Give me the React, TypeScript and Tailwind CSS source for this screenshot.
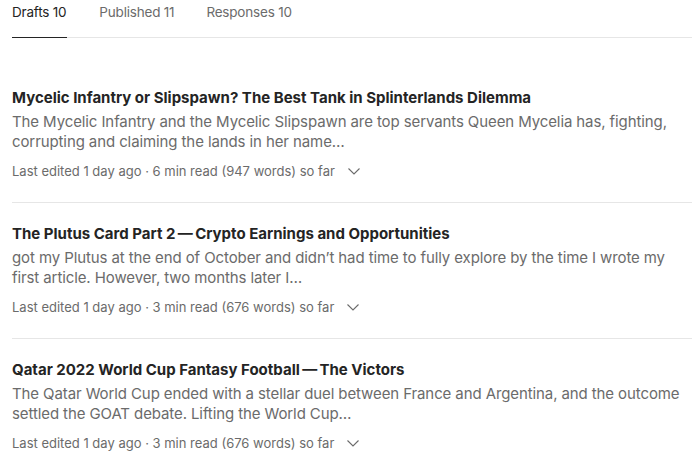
import React from "react";

const items = [
  {
    title: "Mycelic Infantry or Slipspawn? The Best Tank in Splinterlands Dilemma",
    body: "The Mycelic Infantry and the Mycelic Slipspawn are top servants Queen Mycelia has, fighting, corrupting and claiming the lands in her name…",
    meta: "Last edited 1 day ago · 6 min read (947 words) so far",
  },
  {
    title: "The Plutus Card Part 2\u2009\u2014\u2009Crypto Earnings and Opportunities",
    body: "got my Plutus at the end of October and didn\u2019t had time to fully explore by the time I wrote my first article. However, two months later I…",
    meta: "Last edited 1 day ago · 3 min read (676 words) so far",
  },
  {
    title: "Qatar 2022 World Cup Fantasy Football\u2009\u2014\u2009The Victors",
    body: "The Qatar World Cup ended with a stellar duel between France and Argentina, and the outcome settled the GOAT debate. Lifting the World Cup…",
    meta: "Last edited 1 day ago · 3 min read (676 words) so far",
  },
];

function Chevron() {
  return (
    <svg width="14" height="14" viewBox="0 0 14 14" fill="none" className="ml-[12px]">
      <path d="M1.5 4.5 L7 10 L12.5 4.5" stroke="#6b6b6b" strokeWidth="1.1" />
    </svg>
  );
}

export default function App() {
  return (
    <div className="w-[696px] h-[474px] bg-white overflow-hidden" style={{ fontFamily: "Inter, 'Noto Sans', sans-serif" }}>
      <div className="ml-[12px] mr-[4px] flex border-b border-[#e6e6e6] text-[13.5px] tracking-[-0.2px] text-[#6b6b6b] h-[38px] whitespace-nowrap">
        <div className="text-[#242424] border-b border-[#242424] h-[38px] pt-[2px] mr-[32px] pr-[1px]">Drafts 10</div>
        <div className="pt-[2px] mr-[32px]">Published 11</div>
        <div className="pt-[2px]">Responses 10</div>
      </div>
      <div className="ml-[12px] mr-[4px] mt-[50px]">
        {items.map((it, i) => (
          <div key={i} className={i > 0 ? "border-t border-[#e6e6e6] pt-[21px] pb-[22px]" : "pb-[22px]"}>
            <div className="text-[15px] font-bold text-[#242424] leading-[20px]">{it.title}</div>
            <div className="text-[15px] text-[#6b6b6b] leading-[20px] mt-[4px] tracking-[-0.1px]">{it.body}</div>
            <div className="flex items-center text-[13px] text-[#6b6b6b] mt-[10px] leading-[18px]">
              <span>{it.meta}</span>
              <Chevron />
            </div>
          </div>
        ))}
      </div>
    </div>
  );
}
